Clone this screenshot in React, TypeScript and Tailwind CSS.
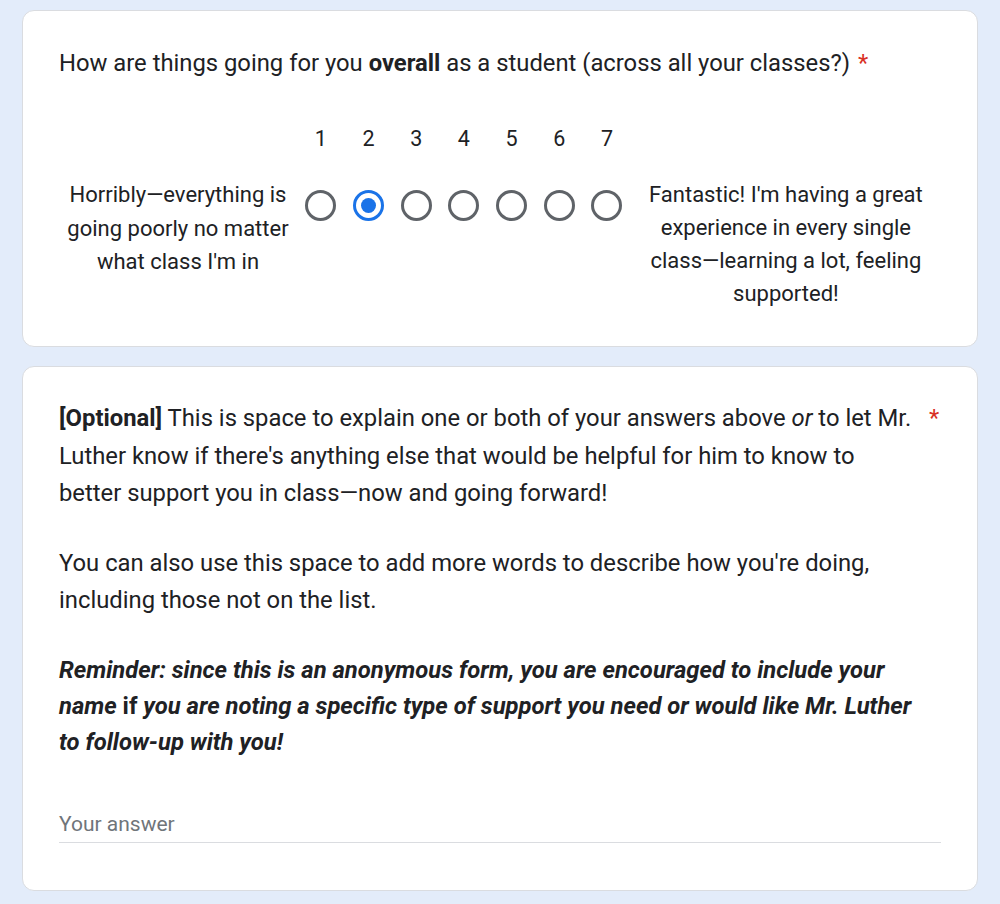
const SCALE = [1, 2, 3, 4, 5, 6, 7];

function Asterisk({ pad }: { pad: string }) {
  return <span className={`text-[#d93025] ${pad}`}>*</span>;
}

function Radio({ checked }: { checked: boolean }) {
  return (
    <div
      className={`flex h-[31px] w-[31px] items-center justify-center rounded-full border-[3px] ${
        checked ? "border-[#1a73e8]" : "border-[#5f6368]"
      }`}
    >
      {checked && <div className="h-[15px] w-[15px] rounded-full bg-[#1a73e8]" />}
    </div>
  );
}

export default function App() {
  return (
    <div
      className="min-h-[904px] bg-[#e3ecfa] px-[22px] pt-[10px] text-[#202124]"
      style={{ fontFamily: "Roboto, 'Noto Sans', sans-serif" }}
    >
      <div className="rounded-[12px] border border-[#dadce0] bg-white px-[36px] pt-[34px] pb-[36px]">
        <div className="text-[23.8px] leading-[37px]">
          How are things going for you <span className="font-bold">overall</span> as a student
          (across all your classes?)
          <Asterisk pad="pl-[8px]" />
        </div>

        <div className="mt-[40px] flex">
          <div className="w-[238px] shrink-0 pt-[56px] text-center text-[22px] leading-[33.5px]">
            Horribly—everything is going poorly no matter what class I'm in
          </div>
          {SCALE.map((n) => (
            <div key={n} className="flex w-[47.7px] shrink-0 flex-col items-center">
              <div className="text-[21.5px] leading-[34px]">{n}</div>
              <div className="mt-[34px]">
                <Radio checked={n === 2} />
              </div>
            </div>
          ))}
          <div className="flex-1 pt-[56px] text-center text-[22px] leading-[33px]">
            <div className="mx-auto w-[295px]">
              Fantastic! I'm having a great experience in every single class—learning a lot,
              feeling supported!
            </div>
          </div>
        </div>
      </div>

      <div className="mt-[19px] rounded-[12px] border border-[#dadce0] bg-white px-[36px] pt-[33px] pb-[47px]">
        <div className="flex text-[23.8px] leading-[37.5px]">
          <div className="w-[858px]">
            <p>
              <span className="font-bold">[Optional]</span> This is space to explain one or both
              of your answers above <span className="italic">or</span> to let Mr. Luther know if
              there's anything else that would be helpful for him to know to better support you in
              class—now and going forward!
            </p>
            <p className="mt-[32px]">
              You can also use this space to add more words to describe how you're doing,
              including those not on the list.
            </p>
            <p className="mt-[32px] font-bold italic leading-[36px]">
              Reminder: since this is an anonymous form, you are encouraged to include your name{" "}
              <span className="not-italic">if</span> you are noting a specific type of support you
              need or would like Mr. Luther to follow-up with you!
            </p>
          </div>
          <Asterisk pad="pl-[12px]" />
        </div>

        <div className="mt-[49px] border-b border-[#dadce0] pb-[3px] text-[21px] leading-[30px] text-[#70757a]">
          Your answer
        </div>
      </div>
    </div>
  );
}
